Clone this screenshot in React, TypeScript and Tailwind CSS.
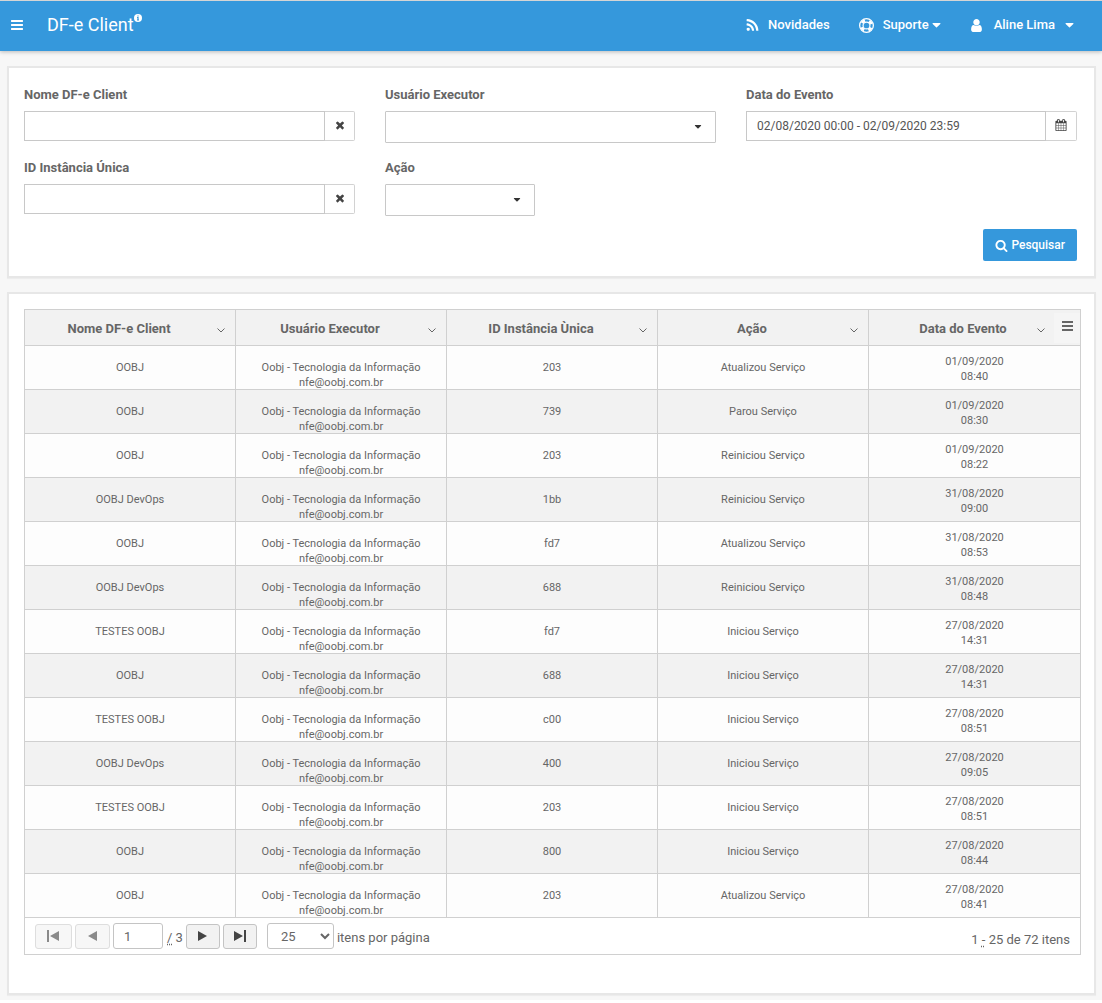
import { useState } from "react";
import type { ReactNode } from "react";

const ICONS = {
  bars: "M1664 1344v128q0 26-19 45t-45 19h-1408q-26 0-45-19t-19-45v-128q0-26 19-45t45-19h1408q26 0 45 19t19 45zm0-512v128q0 26-19 45t-45 19h-1408q-26 0-45-19t-19-45v-128q0-26 19-45t45-19h1408q26 0 45 19t19 45zm0-512v128q0 26-19 45t-45 19h-1408q-26 0-45-19t-19-45v-128q0-26 19-45t45-19h1408q26 0 45 19t19 45z",
  rss: "M576 1344q0 80-56 136t-136 56-136-56-56-136 56-136 136-56 136 56 56 136zm512 123q2 28-17 48-18 21-47 21h-135q-25 0-43-16.5t-20-41.5q-22-229-184.5-391.5t-391.5-184.5q-25-2-41.5-20t-16.5-43v-135q0-29 21-47 17-17 43-17h5q160 13 306 80.5t259 181.5q114 113 181.5 259t80.5 306zm512 2q2 27-18 47-18 20-46 20h-143q-26 0-44.5-17.5t-19.5-42.5q-12-215-101-408.5t-231.5-336-336-231.5-408.5-102q-25-1-42.5-19.5t-17.5-43.5v-143q0-28 20-46 18-18 44-18h3q262 13 501.5 120t425.5 294q187 186 294 425.5t120 501.5z",
  user: "M1536 1399q0 109-62.5 187t-150.5 78h-854q-88 0-150.5-78t-62.5-187q0-85 8.5-160.5t31.5-152 58.5-131 94-89 134.5-34.5q131 128 313 128t313-128q76 0 134.5 34.5t94 89 58.5 131 31.5 152 8.5 160.5zm-256-887q0 159-112.5 271.5t-271.5 112.5-271.5-112.5-112.5-271.5 112.5-271.5 271.5-112.5 271.5 112.5 112.5 271.5z",
  times: "M1490 1322q0 40-28 68l-136 136q-28 28-68 28t-68-28l-294-294-294 294q-28 28-68 28t-68-28l-136-136q-28-28-28-68t28-68l294-294-294-294q-28-28-28-68t28-68l136-136q28-28 68-28t68 28l294 294 294-294q28-28 68-28t68 28l136 136q28 28 28 68t-28 68l-294 294 294 294q28 28 28 68z",
  search: "M1216 832q0-185-131.5-316.5t-316.5-131.5-316.5 131.5-131.5 316.5 131.5 316.5 316.5 131.5 316.5-131.5 131.5-316.5zm512 832q0 52-38 90t-90 38q-54 0-90-38l-343-342q-179 124-399 124-143 0-273.5-55.5t-225-150-150-225-55.5-273.5 55.5-273.5 150-225 225-150 273.5-55.5 273.5 55.5 225 150 150 225 55.5 273.5q0 220-124 399l343 343q37 37 37 90z",
  calendar: "M192 1664h288v-288h-288v288zm352 0h320v-288h-320v288zm-352-352h288v-320h-288v320zm352 0h320v-320h-320v320zm-352-384h288v-288h-288v288zm736 736h320v-288h-320v288zm-384-736h320v-288h-320v288zm768 736h288v-288h-288v288zm-384-352h320v-320h-320v320zm-352-864v-288q0-13-9.5-22.5t-22.5-9.5h-64q-13 0-22.5 9.5t-9.5 22.5v288q0 13 9.5 22.5t22.5 9.5h64q13 0 22.5-9.5t9.5-22.5zm736 864h288v-320h-288v320zm-384-384h320v-288h-320v288zm384 0h288v-288h-288v288zm32-480v-288q0-13-9.5-22.5t-22.5-9.5h-64q-13 0-22.5 9.5t-9.5 22.5v288q0 13 9.5 22.5t22.5 9.5h64q13 0 22.5-9.5t9.5-22.5zm384-64v1280q0 52-38 90t-90 38h-1408q-52 0-90-38t-38-90v-1280q0-52 38-90t90-38h128v-96q0-66 47-113t113-47h64q66 0 113 47t47 113v96h384v-96q0-66 47-113t113-47h64q66 0 113 47t47 113v96h128q52 0 90 38t38 90z",
};

const COLUMNS = ["Nome DF-e Client", "Usuário Executor", "ID Instância Ùnica", "Ação", "Data do Evento"];

const ROWS = [
  { name: "OOBJ", id: "203", action: "Atualizou Serviço", date: "01/09/2020", time: "08:40" },
  { name: "OOBJ", id: "739", action: "Parou Serviço", date: "01/09/2020", time: "08:30" },
  { name: "OOBJ", id: "203", action: "Reiniciou Serviço", date: "01/09/2020", time: "08:22" },
  { name: "OOBJ DevOps", id: "1bb", action: "Reiniciou Serviço", date: "31/08/2020", time: "09:00" },
  { name: "OOBJ", id: "fd7", action: "Atualizou Serviço", date: "31/08/2020", time: "08:53" },
  { name: "OOBJ DevOps", id: "688", action: "Reiniciou Serviço", date: "31/08/2020", time: "08:48" },
  { name: "TESTES OOBJ", id: "fd7", action: "Iniciou Serviço", date: "27/08/2020", time: "14:31" },
  { name: "OOBJ", id: "688", action: "Iniciou Serviço", date: "27/08/2020", time: "14:31" },
  { name: "TESTES OOBJ", id: "c00", action: "Iniciou Serviço", date: "27/08/2020", time: "08:51" },
  { name: "OOBJ DevOps", id: "400", action: "Iniciou Serviço", date: "27/08/2020", time: "09:05" },
  { name: "TESTES OOBJ", id: "203", action: "Iniciou Serviço", date: "27/08/2020", time: "08:51" },
  { name: "OOBJ", id: "800", action: "Iniciou Serviço", date: "27/08/2020", time: "08:44" },
  { name: "OOBJ", id: "203", action: "Atualizou Serviço", date: "27/08/2020", time: "08:41" },
];

function Icon({ name, className }: { name: keyof typeof ICONS; className: string }) {
  return (
    <svg viewBox="0 0 1792 1792" fill="currentColor" overflow="visible" className={className} aria-hidden="true">
      <path d={ICONS[name]} />
    </svg>
  );
}

function LifeRing() {
  return (
    <svg viewBox="0 0 14 14" fill="none" stroke="currentColor" className="h-[15px] w-[15px]" aria-hidden="true">
      <circle cx="7" cy="7" r="6.4" strokeWidth="1.2" />
      <circle cx="7" cy="7" r="3.2" strokeWidth="1.1" />
      <circle cx="7" cy="7" r="4.8" strokeWidth="2.6" strokeDasharray="3.4 4.14" strokeDashoffset="-2.07" />
    </svg>
  );
}

function Caret({ className }: { className: string }) {
  return (
    <svg viewBox="0 0 8 5" fill="currentColor" className={className} aria-hidden="true">
      <path d="M.5 0h7q.5 0 .5.5 0 .2-.2.4L4.4 4.3q-.4.4-.8 0L.2.9Q0 .7 0 .5 0 0 .5 0z" />
    </svg>
  );
}

function Field({ id, label, children }: { id: string; label: string; children: ReactNode }) {
  return (
    <div>
      <label htmlFor={id} className="mb-1.5 block text-[13px] font-bold leading-5">{label}</label>
      {children}
    </div>
  );
}

function ClearableInput({ id }: { id: string }) {
  const [value, setValue] = useState("");
  return (
    <div className="flex h-[30px]">
      <input id={id} value={value} onChange={(e) => setValue(e.target.value)} className="min-w-0 flex-1 border border-[#c8c8c8] px-2.5 text-xs outline-none" />
      <button type="button" aria-label="Limpar" onClick={() => setValue("")} className="flex w-[30px] items-center justify-center rounded-r-[2px] border border-l-0 border-[#d2d2d2] pb-0.5 text-[#444]">
        <Icon name="times" className="h-3 w-3" />
      </button>
    </div>
  );
}

function Dropdown({ id, className }: { id: string; className: string }) {
  return (
    <div className={`relative ${className}`}>
      <select id={id} className="block h-8 w-full appearance-none rounded-[1px] border border-[#c8c8c8] bg-white px-2.5 text-xs outline-none" />
      <Caret className="pointer-events-none absolute right-[14px] top-[14px] h-[4px] w-[8px] text-[#333]" />
    </div>
  );
}

function PagerButton({ label, disabled, className, children }: { label: string; disabled?: boolean; className: string; children: ReactNode }) {
  return (
    <button
      type="button"
      aria-label={label}
      disabled={disabled}
      className={`flex h-[25px] items-center justify-center rounded-[3px] border border-[#c4c4c4] bg-[#f2f2f2] text-[#444] disabled:border-[#dedede] disabled:bg-[#f7f7f7] disabled:text-[#8a8a8a] ${className}`}
    >
      <svg viewBox="0 0 13 12" fill="currentColor" className="h-3 w-[13px]" aria-hidden="true">{children}</svg>
    </button>
  );
}

export default function App() {
  const [page, setPage] = useState("1");
  const [period, setPeriod] = useState("02/08/2020 00:00 - 02/09/2020 23:59");

  return (
    <div className="bg-[#f7f7f7] pb-[5px] font-[Roboto,sans-serif] text-[13px] text-[#666]">
      <header className="flex h-[51px] items-center border-t border-[#d5d5d5] bg-[#3598dc] pb-0.5 pl-[10px] pr-7 text-white shadow-[0_1px_4px_rgba(0,0,0,0.25)]">
        <button type="button" aria-label="Menu"><Icon name="bars" className="h-[14px] w-[14px]" /></button>
        <h1 className="ml-[23px] flex text-lg leading-6">
          DF-e Client
          <svg viewBox="0 0 8 8" className="mt-px h-2 w-2" aria-hidden="true">
            <circle cx="4" cy="4" r="4" fill="white" />
            <path d="M3.4 1.4h1.2v1H3.4zM3 3.1h1.6v2.5H5v.8H3v-.8h.4V3.9H3z" fill="#3598dc" />
          </svg>
        </h1>
        <nav className="ml-auto flex items-center font-medium">
          <a href="#novidades" className="flex items-center gap-2"><Icon name="rss" className="h-[15px] w-[15px]" />Novidades</a>
          <button type="button" className="ml-[29px] flex items-center">
            <LifeRing />
            <span className="ml-[9px] mr-[3px]">Suporte</span>
            <Caret className="h-[5px] w-[9px]" />
          </button>
          <button type="button" className="ml-7 flex items-center">
            <Icon name="user" className="h-[15px] w-[15px]" />
            <span className="ml-[10px] mr-[10px]">Aline Lima</span>
            <Caret className="h-[5px] w-[9px]" />
          </button>
        </nav>
      </header>

      <main className="flex flex-col gap-[14px] pl-[7px] pr-1.5 pt-[15px]">
        <form onSubmit={(e) => e.preventDefault()} className="border-2 border-[#e7e7e7] bg-white pb-[15px] pl-[15px] pr-[17px] pt-[17px] shadow-[0_1px_1px_rgba(0,0,0,0.04)]">
          <div className="grid grid-cols-3 gap-x-[30px] gap-y-[15px]">
            <Field id="client" label="Nome DF-e Client"><ClearableInput id="client" /></Field>
            <Field id="executor" label="Usuário Executor"><Dropdown id="executor" className="w-full" /></Field>
            <Field id="period" label="Data do Evento">
              <div className="flex h-[30px]">
                <input id="period" value={period} onChange={(e) => setPeriod(e.target.value)} className="min-w-0 flex-1 border border-[#c8c8c8] px-2.5 text-xs text-[#555] outline-none" />
                <button type="button" aria-label="Abrir calendário" className="flex w-[31px] items-center justify-center rounded-r-[2px] border border-l-0 border-[#d2d2d2] pb-0.5 text-[#444]">
                  <Icon name="calendar" className="h-3 w-3" />
                </button>
              </div>
            </Field>
            <Field id="instance" label="ID Instância Única"><ClearableInput id="instance" /></Field>
            <Field id="action" label="Ação"><Dropdown id="action" className="w-[150px]" /></Field>
          </div>
          <div className="mt-[13px] flex justify-end">
            <button type="submit" className="flex h-8 items-center gap-[3px] rounded-[2px] bg-[#3598dc] px-3 text-xs font-medium text-white">
              <Icon name="search" className="h-[13px] w-[13px]" />
              Pesquisar
            </button>
          </div>
        </form>

        <section className="border-2 border-[#e7e7e7] bg-white pb-[38px] pl-[15px] pr-[13px] pt-[15px] shadow-[0_1px_1px_rgba(0,0,0,0.04)]">
          <div className="border border-[#d0d0d0]">
            <table className="w-full table-fixed border-separate border-spacing-0 text-center">
              <thead>
                <tr className="h-9 bg-[#f2f2f2]">
                  {COLUMNS.map((c, i) => {
                    const last = i === COLUMNS.length - 1;
                    return (
                      <th key={c} className="border-b border-r border-[#d0d0d0] p-0 last:border-r-0">
                        <div className={`flex items-center ${last ? "pl-[25px]" : ""}`}>
                          <span className="flex-1 pt-0.5">{c}</span>
                          <button type="button" aria-label={`Opções de ${c}`} className={`flex pt-1.5 ${last ? "w-[18px] justify-center" : "w-[22px] pl-1"}`}>
                            <svg viewBox="0 0 8 5" fill="none" stroke="currentColor" strokeWidth="1" className="h-[5px] w-2" aria-hidden="true">
                              <path d="M.5.5 4 4 7.5.5" />
                            </svg>
                          </button>
                          {last && (
                            <button type="button" aria-label="Menu da tabela" className="ml-1 flex h-[30px] w-[26px] justify-center bg-[#f5f5f5] pt-2">
                              <svg viewBox="0 0 11 10" fill="currentColor" className="h-[10px] w-[11px]" aria-hidden="true">
                                <path d="M0 0h11v2H0zM0 4h11v2H0zM0 8h11v2H0z" />
                              </svg>
                            </button>
                          )}
                        </div>
                      </th>
                    );
                  })}
                </tr>
              </thead>
              <tbody className="text-[11px] leading-[15px] [&_td]:border-b [&_td]:border-r [&_td]:border-[#d0d0d0] [&_td:last-child]:border-r-0">
                {ROWS.map((r, i) => (
                  <tr key={i} className="h-11 odd:bg-[#fdfdfd] even:bg-[#f2f2f2]">
                    <td className="p-0">{r.name}</td>
                    <td className="p-0 pt-[14px]">
                      <div className="h-[29px]">Oobj - Tecnologia da Informação<br />nfe@oobj.com.br</div>
                    </td>
                    <td className="p-0">{r.id}</td>
                    <td className="p-0">{r.action}</td>
                    <td className="p-0 pt-2 align-top">{r.date}<br />{r.time}</td>
                  </tr>
                ))}
              </tbody>
            </table>
            <div className="flex h-9 items-center px-[10px]">
              <PagerButton label="Primeira página" disabled className="w-[37px]"><path d="M0 0h2v12H0zM12 1v10L3 6z" /></PagerButton>
              <PagerButton label="Página anterior" disabled className="ml-[3px] w-[35px]"><path d="M11 1v10L2 6z" /></PagerButton>
              <input aria-label="Página" value={page} onChange={(e) => setPage(e.target.value)} className="ml-[3px] h-[26px] w-[50px] rounded-[3px] border border-[#c4c4c4] px-[10px] outline-none" />
              <span className="ml-1 mr-[3px] pt-[3px]"><abbr className="underline decoration-dotted underline-offset-2">/</abbr> 3</span>
              <PagerButton label="Próxima página" className="w-[34px]"><path d="M2 1v10l9-5z" /></PagerButton>
              <PagerButton label="Última página" className="ml-[3px] w-[34px]"><path d="M11 0h2v12h-2zM1 1v10l9-5z" /></PagerButton>
              <select id="page-size" defaultValue="25" className="ml-[10px] h-[26px] w-[67px] rounded-[3px] border border-[#c4c4c4] bg-white pl-[9px] outline-none">
                <option>25</option>
                <option>50</option>
                <option>100</option>
              </select>
              <label htmlFor="page-size" className="ml-[3px] pt-[3px]">itens por página</label>
              <span className="ml-auto pt-[7px]">1 <abbr className="underline decoration-dotted underline-offset-2">-</abbr> 25 de 72 itens</span>
            </div>
          </div>
        </section>
      </main>
    </div>
  );
}
